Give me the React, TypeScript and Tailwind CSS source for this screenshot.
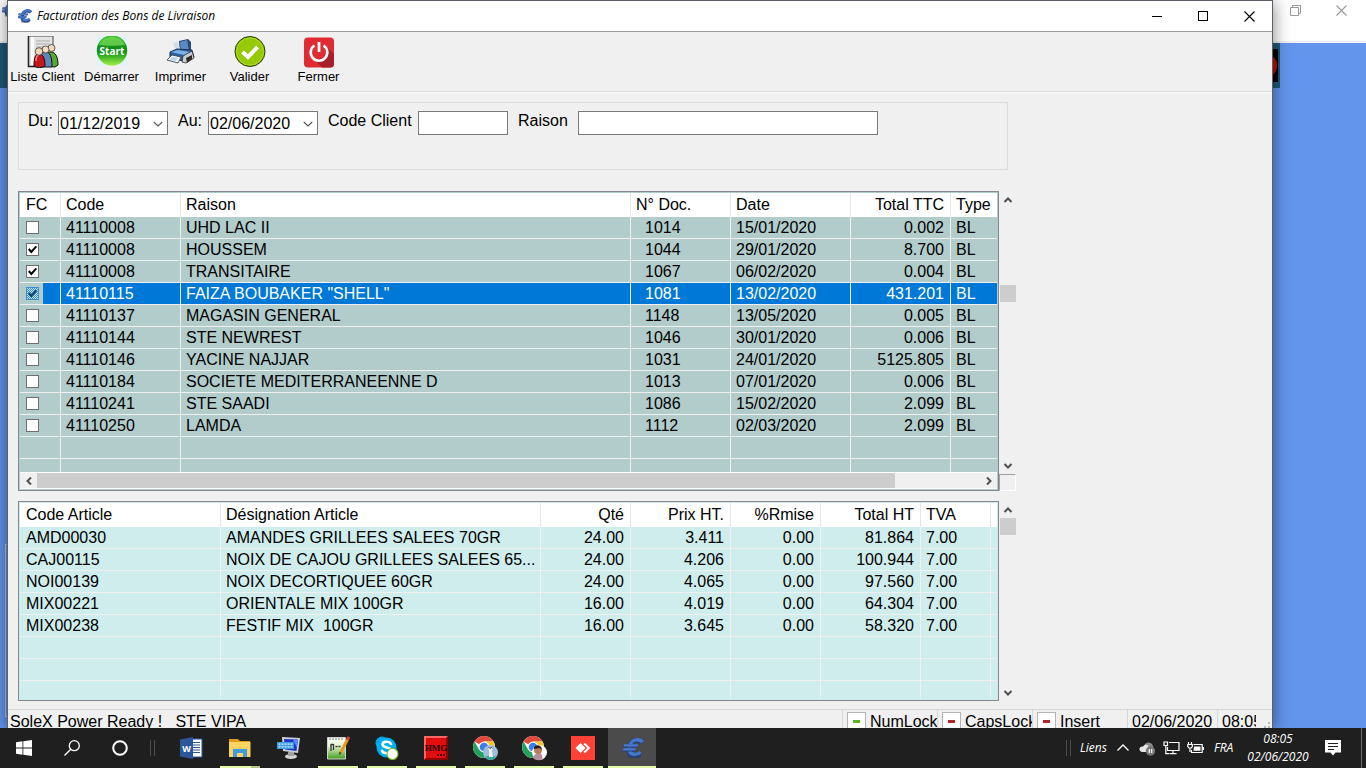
import React from "react";

type Slip = {
  checked: boolean;
  code: string;
  name: string;
  doc: string;
  date: string;
  total: string;
  selected?: boolean;
};

const slips: Slip[] = [
  { checked: false, code: "41110008", name: "UHD LAC II", doc: "1014", date: "15/01/2020", total: "0.002" },
  { checked: true, code: "41110008", name: "HOUSSEM", doc: "1044", date: "29/01/2020", total: "8.700" },
  { checked: true, code: "41110008", name: "TRANSITAIRE", doc: "1067", date: "06/02/2020", total: "0.004" },
  { checked: true, code: "41110115", name: 'FAIZA BOUBAKER "SHELL"', doc: "1081", date: "13/02/2020", total: "431.201", selected: true },
  { checked: false, code: "41110137", name: "MAGASIN GENERAL", doc: "1148", date: "13/05/2020", total: "0.005" },
  { checked: false, code: "41110144", name: "STE NEWREST", doc: "1046", date: "30/01/2020", total: "0.006" },
  { checked: false, code: "41110146", name: "YACINE NAJJAR", doc: "1031", date: "24/01/2020", total: "5125.805" },
  { checked: false, code: "41110184", name: "SOCIETE MEDITERRANEENNE D", doc: "1013", date: "07/01/2020", total: "0.006" },
  { checked: false, code: "41110241", name: "STE SAADI", doc: "1086", date: "15/02/2020", total: "2.099" },
  { checked: false, code: "41110250", name: "LAMDA", doc: "1112", date: "02/03/2020", total: "2.099" },
];

const articles = [
  ["AMD00030", "AMANDES GRILLEES SALEES 70GR", "24.00", "3.411", "0.00", "81.864", "7.00"],
  ["CAJ00115", "NOIX DE CAJOU GRILLEES SALEES 65...", "24.00", "4.206", "0.00", "100.944", "7.00"],
  ["NOI00139", "NOIX DECORTIQUEE 60GR", "24.00", "4.065", "0.00", "97.560", "7.00"],
  ["MIX00221", "ORIENTALE MIX 100GR", "16.00", "4.019", "0.00", "64.304", "7.00"],
  ["MIX00238", "FESTIF MIX  100GR", "16.00", "3.645", "0.00", "58.320", "7.00"],
];

const UI_FONT = "font-['Open_Sans',sans-serif]";

function EuroIcon({ className }: { className: string }) {
  return (
    <svg viewBox="0 0 24 24" className={className} aria-hidden="true">
      <ellipse cx="14" cy="20.500" rx="7" ry="1.500" fill="#1c3566" opacity=".5" />
      <g transform="skewX(-10) translate(3 0)" fill="none">
        <path d="M20.500 6.800C18 3.500 8.500 2 8.500 11.500S18 19.800 20.500 17" stroke="#223f80" strokeWidth="5" />
        <path d="M20.500 6.200C18 3 8.500 1.500 8.500 11S18 19 20.500 16.200" stroke="#4677c9" strokeWidth="3.400" />
        <path d="M2.500 9.800h14M2.500 13.800h12.500" stroke="#223f80" strokeWidth="3.200" />
        <path d="M2.500 9.400h14M2.500 13.400h12.500" stroke="#4a7bcf" strokeWidth="2.200" />
      </g>
    </svg>
  );
}

function ClientsIcon() {
  return (
    <svg viewBox="0 0 32 32" className="size-8" aria-hidden="true">
      <path d="M3 0h23v31H3z" fill="#e4e4e4" />
      <path d="M1.500 0v30.500H12" fill="none" stroke="#222" strokeWidth="1.600" />
      <path d="M2 0h24v10" fill="none" stroke="#444" />
      <path d="M4 1h3v28H4z" fill="#fafafa" />
      <path d="M9 5h14M9 8h14M9 11h8M9 14h4" stroke="#a9a9a9" />
      <path d="M19 30c0-11 1-14 5-14s7 4 7 13l-3 2z" fill="#58a832" stroke="#111" />
      <circle cx="24.500" cy="12" r="3.500" fill="#eed9bd" stroke="#222" strokeWidth=".7" />
      <path d="M13 31c0-11 1-15 5.500-15S25 20 25 31z" fill="#5f86bd" stroke="#111" />
      <circle cx="18.500" cy="13.500" r="3.500" fill="#f2dfc8" stroke="#222" strokeWidth=".7" />
      <path d="M7 30c0-8 1-12 5-12s6 4 6 12c-3 2-8 2-11 0z" fill="#c8171c" stroke="#111" />
      <path d="M9 25c0-4 1-6 3-6" fill="none" stroke="#f08a86" strokeWidth="1.500" />
      <circle cx="12" cy="15.500" r="3.800" fill="#f1d7b8" stroke="#222" strokeWidth=".7" />
    </svg>
  );
}

function StartIcon() {
  return (
    <svg viewBox="0 0 32 32" className="size-8" aria-hidden="true">
      <defs>
        <linearGradient id="startBall" x1="0" y1="0" x2="0" y2="1">
          <stop offset="0" stopColor="#35c225" />
          <stop offset=".45" stopColor="#0c8a17" />
          <stop offset=".62" stopColor="#22a41c" />
          <stop offset="1" stopColor="#a6f04a" />
        </linearGradient>
      </defs>
      <path d="M0 0h32v30H0z" fill="#e4f1f7" />
      <circle cx="16" cy="14.500" r="15.200" fill="url(#startBall)" />
      <path d="M3 9C7-2 25-2 29 9c-8 1-18 1-26 0z" fill="#83df63" opacity=".65" />
      <text x="16" y="18.500" textAnchor="middle" fontSize="10" fontWeight="700" fontFamily="Open Sans, sans-serif" fill="#fff">Start</text>
    </svg>
  );
}

function PrinterIcon() {
  return (
    <svg viewBox="0 0 32 32" className="size-8" aria-hidden="true">
      <path d="M14 5l9-2 3 3v11l-11 1z" fill="#2b4876" />
      <path d="M15 6l7-2 2 11-8 1z" fill="#5b8bc4" />
      <path d="M8 8l4-3 4 10-3 2z" fill="#cfdcec" />
      <path d="M5 16l7-3 15 1 2 7-8 5L5 21z" fill="#2c5f9f" stroke="#1a2f50" />
      <path d="M6 16l7-2 12 2-6 3z" fill="#7bb1e4" />
      <path d="M18 20l9-5 2 7-8 5-4-1z" fill="#c9ced3" stroke="#333" strokeWidth=".8" />
      <path d="M21 22l6-3v4l-5 4z" fill="#302a26" />
      <path d="M7 19l9 2-3 6-11-3z" fill="#f7fafc" stroke="#3d4853" strokeWidth=".9" />
      <path d="M7 21l6 1-2 3-6-1z" fill="#b3d5ea" />
    </svg>
  );
}

function ValidateIcon() {
  return (
    <svg viewBox="0 0 32 32" className="size-8" aria-hidden="true">
      <circle cx="16" cy="15.500" r="15" fill="#96c908" stroke="#26350a" strokeWidth="1" />
      <circle cx="16" cy="15.500" r="13.500" fill="none" stroke="#a9dd22" strokeWidth="1" />
      <path d="M8.500 16l5.500 5 9.500-10" fill="none" stroke="#fff" strokeWidth="4" />
    </svg>
  );
}

function PowerIcon() {
  return (
    <svg viewBox="0 0 32 32" className="size-8" aria-hidden="true">
      <rect x="1" y="1.500" width="30" height="30" rx="4" fill="#df2b31" />
      <path d="M22 10l9 8v10q0 3.500-3.500 3.500H19L10 22z" fill="#a71f2a" />
      <circle cx="16" cy="16" r="7" fill="#df2b31" />
      <path d="M11.500 9.500a8.300 8.300 0 1 0 9 0" fill="none" stroke="#fff" strokeWidth="2.600" />
      <path d="M16 6v10" stroke="#fff" strokeWidth="2.800" />
    </svg>
  );
}

const tools: { label: string; icon: React.ReactNode }[] = [
  { label: "Liste Client", icon: <ClientsIcon /> },
  { label: "Démarrer", icon: <StartIcon /> },
  { label: "Imprimer", icon: <PrinterIcon /> },
  { label: "Valider", icon: <ValidateIcon /> },
  { label: "Fermer", icon: <PowerIcon /> },
];

function Chevron({ dir }: { dir: "up" | "down" | "left" | "right" }) {
  const d = {
    up: "M1.500 7 5 3.500 8.500 7",
    down: "M1.500 3 5 6.500 8.500 3",
    left: "M7 1.500 3.500 5 7 8.500",
    right: "M3 1.500 6.500 5 3 8.500",
  }[dir];
  return (
    <svg viewBox="0 0 10 10" className="size-[10px]" aria-hidden="true">
      <path d={d} fill="none" stroke="#505050" strokeWidth="2" />
    </svg>
  );
}

function CloseGlyph() {
  return (
    <svg viewBox="0 0 11 11" className="size-[11px]" aria-hidden="true">
      <path d="M.5.5l10 10M10.500.5l-10 10" stroke="currentColor" strokeWidth="1.100" />
    </svg>
  );
}

function DateField({ id, label, value }: { id: string; label: string; value: string }) {
  return (
    <div className="flex">
      <label htmlFor={id} className="w-[30px] leading-5">{label}</label>
      <div className="flex h-6 w-[110px] items-stretch border border-[#7a7a7a] bg-white">
        <input id={id} defaultValue={value} className="min-w-0 flex-1 pt-[2px] pl-px leading-5 outline-none" />
        <button type="button" aria-label={`Calendrier ${label}`} className="flex w-[18px] shrink-0 items-center justify-center pt-px">
          <svg viewBox="0 0 10 10" className="size-[10px]" aria-hidden="true">
            <path d="M.8 3 5 7 9.200 3" fill="none" stroke="#555" strokeWidth="1.100" />
          </svg>
        </button>
      </div>
    </div>
  );
}

function RowCheck({ row, index }: { row: Slip; index: number }) {
  const box = row.selected
    ? "border-[#3f8fd0] bg-[#5fa8e2] bg-[repeating-conic-gradient(#2b8bdc_0_25%,#cfe5f6_0_50%)] bg-[length:2px_2px]"
    : "border-[#6e6e6e] bg-white";
  return (
    <label className="grid w-[13px] place-items-center">
      <input
        type="checkbox"
        defaultChecked={row.checked}
        aria-label={`Sélectionner ligne ${index + 1}`}
        className={`peer col-start-1 row-start-1 size-[13px] appearance-none border ${box}`}
      />
      <svg viewBox="0 0 13 13" className="invisible col-start-1 row-start-1 size-[13px] peer-checked:visible" aria-hidden="true">
        <path d="M2.800 6 5.300 9 10.300 3.300" fill="none" stroke={row.selected ? "#06407a" : "#000"} strokeWidth="2" />
      </svg>
    </label>
  );
}

const head = "h-6 border-r border-[#e5e5e5] bg-white pr-[6px] pl-[5px] font-normal leading-6 first:pl-[6px] last:border-r-0 last:pr-0";
const cell = "h-[22px] border-r border-b border-[#f0f0f0] py-0 pr-[6px] pl-[5px] leading-[21px] first:pl-[6px] last:border-r-0";

function SlipTable() {
  return (
    <div className="flex h-[300px] min-w-0 flex-1 flex-col border border-[#828790] bg-[#b2cccc] p-px">
      <div className="min-h-0 flex-1 overflow-hidden">
        <table className="w-full table-fixed border-separate border-spacing-0 whitespace-pre">
          <colgroup>
            <col className="w-[41px]" />
            <col className="w-[120px]" />
            <col />
            <col className="w-[100px]" />
            <col className="w-[120px]" />
            <col className="w-[100px]" />
            <col className="w-[46px]" />
          </colgroup>
          <thead>
            <tr className="text-left">
              <th className={head}>FC</th>
              <th className={head}>Code</th>
              <th className={head}>Raison</th>
              <th className={head}>N° Doc.</th>
              <th className={head}>Date</th>
              <th className={`${head} text-right`}>Total TTC</th>
              <th className={head}>Type</th>
            </tr>
          </thead>
          <tbody>
            {slips.map((row, i) => (
              <tr key={i} className={row.selected ? "bg-[#0078d7] text-white" : ""}>
                <td className={`${cell} ${row.selected ? "bg-[linear-gradient(to_right,#b2cccc_23px,#0078d7_23px)]" : ""}`}>
                  <RowCheck row={row} index={i} />
                </td>
                <td className={cell}>{row.code}</td>
                <td className={cell}>{row.name}</td>
                <td className={`${cell} pl-[14px]`}>{row.doc}</td>
                <td className={cell}>{row.date}</td>
                <td className={`${cell} text-right`}>{row.total}</td>
                <td className={cell}>BL</td>
              </tr>
            ))}
            {[0, 1].map((n) => (
              <tr key={n}>
                {[0, 1, 2, 3, 4, 5, 6].map((c) => <td key={c} className={cell} />)}
              </tr>
            ))}
          </tbody>
        </table>
      </div>
      <div className="flex h-[17px] shrink-0 items-stretch border-y border-white bg-[#f0f0f0]">
        <button type="button" aria-label="Défiler à gauche" className="flex w-[17px] items-center justify-center"><Chevron dir="left" /></button>
        <div className="flex-1">
          <div className="h-full w-[91%] bg-[#cdcdcd]" />
        </div>
        <button type="button" aria-label="Défiler à droite" className="flex w-[17px] items-center justify-center"><Chevron dir="right" /></button>
      </div>
    </div>
  );
}

function ArticleTable() {
  const right = [2, 3, 4, 5];
  const heads = ["Code Article", "Désignation Article", "Qté", "Prix HT.", "%Rmise", "Total HT", "TVA", ""];
  return (
    <div className="h-[200px] min-w-0 flex-1 border border-[#828790] bg-[#d0eded] p-px">
      <div className="h-full overflow-hidden">
        <table className="w-full table-fixed border-separate border-spacing-0 whitespace-pre">
          <colgroup>
            <col className="w-[201px]" />
            <col />
            <col className="w-[90px]" />
            <col className="w-[100px]" />
            <col className="w-[90px]" />
            <col className="w-[100px]" />
            <col className="w-[70px]" />
            <col className="w-[6px]" />
          </colgroup>
          <thead>
            <tr className="text-left">
              {heads.map((h, c) => (
                <th key={c} className={`${head} last:px-0 ${right.includes(c) ? "text-right" : ""}`}>{h}</th>
              ))}
            </tr>
          </thead>
          <tbody>
            {articles.map((row) => (
              <tr key={row[0]}>
                {row.map((v, c) => (
                  <td key={c} className={`${cell} ${right.includes(c) ? "text-right" : ""}`}>{v}</td>
                ))}
                <td className={`${cell} last:px-0`} />
              </tr>
            ))}
            {[0, 1, 2].map((n) => (
              <tr key={n}>
                {heads.map((_, c) => <td key={c} className={`${cell} last:px-0`} />)}
              </tr>
            ))}
          </tbody>
        </table>
      </div>
    </div>
  );
}

function KeyState({ label, on }: { label: string; on?: boolean }) {
  return (
    <div className="flex w-[95px] shrink-0 overflow-hidden border-l border-[#d7d7d7] pl-1">
      <span className="mt-[2px] flex size-[19px] shrink-0 items-center justify-center border border-[#b4b4b4] bg-white">
        <span className={`h-[3px] w-[7px] ${on ? "bg-[#5cb522]" : "bg-[#b52525]"}`} />
      </span>
      <span className="ml-1 whitespace-nowrap">{label}</span>
    </div>
  );
}

function WordIcon() {
  return (
    <svg viewBox="0 0 24 24" className="size-6" aria-hidden="true">
      <path d="M11 3h12v18H11z" fill="#fff" stroke="#2b579a" />
      <path d="M13 6.500h8M13 9h8M13 11.500h8M13 14h8M13 16.500h8" stroke="#2b579a" strokeWidth="1.200" />
      <path d="M1 3.500 14 1v22L1 20.500z" fill="#2b579a" />
      <text x="7.500" y="15.500" textAnchor="middle" fontSize="9" fontWeight="700" fontFamily="Open Sans, sans-serif" fill="#fff">W</text>
    </svg>
  );
}

function FolderIcon() {
  return (
    <svg viewBox="0 0 24 24" className="size-6" aria-hidden="true">
      <path d="M1 3h9l2 2h10v4H1z" fill="#e39a17" />
      <path d="M1 6h21.500v15H1z" fill="#fcd462" />
      <path d="M5 21v-8h14v8h-4v-4H9v4z" fill="#3f9ade" />
    </svg>
  );
}

function MonitorIcon() {
  return (
    <svg viewBox="0 0 24 24" className="size-6" aria-hidden="true">
      <ellipse cx="14" cy="20.500" rx="6" ry="2.500" fill="#d5d5d5" />
      <path d="M11 16h6v4h-6z" fill="#a0a0a0" />
      <path d="M5 1l18 1-2 15-15-2z" fill="#cdd2da" />
      <path d="M7 3l14 .5-1.500 11.500L8 13.500z" fill="#1f33c9" />
      <path d="M16 4l5-.5-1 8z" fill="#5b8bff" />
      <path d="M0 6h17v7H0z" fill="#3b9be0" />
      <path d="M1.500 8.200h14M1.500 10.800h14" stroke="#d8efff" strokeWidth="1.300" strokeDasharray="2 1" />
    </svg>
  );
}

function NotepadIcon() {
  return (
    <svg viewBox="0 0 24 24" className="size-6" aria-hidden="true">
      <defs>
        <linearGradient id="notepadFill" x1="0" y1="0" x2="0" y2="1">
          <stop offset="0" stopColor="#ffffff" />
          <stop offset=".4" stopColor="#e2f2cf" />
          <stop offset="1" stopColor="#3f9f1c" />
        </linearGradient>
      </defs>
      <path d="M1.500 1.500h18V23h-18z" fill="url(#notepadFill)" stroke="#d2d2d2" />
      <path d="M4 2v2M7 2v2M10 2v2M13 2v2M16 2v2" stroke="#777" />
      <path d="M5 8v7M7.500 8v6M5 8.500h2.500M9.500 10.500h2M12.500 10.500h2" stroke="#333" strokeWidth="1.300" />
      <path d="M21.500 3.500 14.500 17" stroke="#e59a20" strokeWidth="3" />
      <path d="M23 1l-1.800 3" stroke="#d24b3a" strokeWidth="3" />
      <path d="M13.500 16l-.5 3 2.500-2z" fill="#222" />
    </svg>
  );
}

function SkypeIcon() {
  return (
    <svg viewBox="0 0 24 24" className="size-6" aria-hidden="true">
      <circle cx="7" cy="7" r="6.500" fill="#00a4e4" />
      <circle cx="11.500" cy="11.500" r="10" fill="#00aff0" />
      <circle cx="17" cy="17" r="6" fill="#00a4e4" />
      <path d="M16 8C14.500 5 7.500 5 7.500 8.600c0 3.700 8.500 2 8.500 5.600 0 4-7.500 4-9 .6" fill="none" stroke="#fff" strokeWidth="2.600" strokeLinecap="round" />
      <circle cx="17.500" cy="18" r="5.500" fill="#fff" stroke="#78b81c" strokeWidth="1.100" />
    </svg>
  );
}

function HmgIcon() {
  return (
    <svg viewBox="0 0 24 24" className="size-6" aria-hidden="true">
      <path d="M0 0h24v24H0z" fill="#e20d0d" />
      <path d="M0 24V0h24l-2 2H2v20z" fill="#ff6868" />
      <path d="M24 0v24H0l2-2h20V2z" fill="#8f0505" />
      <text x="12" y="15" textAnchor="middle" fontSize="9" fontWeight="700" fontFamily="Liberation Serif, serif" fill="#140000">HMG</text>
      <path d="M13 19h9" stroke="#4b0000" strokeWidth="2" strokeDasharray="2 1" />
    </svg>
  );
}

function ChromeIcon({ person }: { person?: boolean }) {
  return (
    <svg viewBox="0 0 26 26" className="size-[26px]" aria-hidden="true">
      <circle cx="12" cy="12" r="11" fill="#fff" />
      <path d="M12 12 2.500 6.500A11 11 0 0 1 21.500 6.500H12z" fill="#df4a3c" />
      <path d="M12 6.500h9.500A11 11 0 0 1 12 23l4.800-8.300z" fill="#fbc628" />
      <path d="M2.500 6.500A11 11 0 0 0 12 23l4.700-8.300L7.200 14.700z" fill="#25a05a" />
      <circle cx="12" cy="12" r="5.400" fill="#fff" />
      <circle cx="12" cy="12" r="4.300" fill="#3b7ded" />
      <circle cx="18.500" cy="17.500" r="7.500" fill={person ? "#fff" : "#9fbede"} />
      {person ? (
        <g>
          <path d="M12 23c1-4 4-5 6.500-5 2 0 3 3 3 6-3 2-7 1.500-9.500-1z" fill="#b98f9c" />
          <circle cx="17" cy="15" r="4" fill="#b67b58" />
          <path d="M12.800 14c0-5 8-5 8 1l-2-2z" fill="#2c1a14" />
        </g>
      ) : (
        <g>
          <path d="M12.500 22q6-3 12 0-6 6-12 0z" fill="#35a99b" />
          <path d="M17 22v-6l-1-3 2 1 2-1v3l1 6z" fill="#eef0e8" />
          <path d="M16.500 12l1.500 1.500L20 12" stroke="#6a5b48" fill="none" />
        </g>
      )}
    </svg>
  );
}

function AnyDeskIcon() {
  return (
    <svg viewBox="0 0 24 24" className="size-6" aria-hidden="true">
      <path d="M0 0h24v24H0z" fill="#ff4136" />
      <path d="M9.500 7l5 5-5 5-5-5z" fill="#fff" />
      <path d="M12.500 8.200 14 6.800l5.200 5.200-5.200 5.200-1.500-1.400L16.300 12z" fill="#fff" />
    </svg>
  );
}

const apps: { name: string; icon: React.ReactNode; line: string; active?: boolean }[] = [
  { name: "Word", icon: <WordIcon />, line: "" },
  { name: "Explorateur de fichiers", icon: <FolderIcon />, line: "w-10 bg-[linear-gradient(to_right,#e2f9a8_31px,#b4c786_31px)]" },
  { name: "Bureau à distance", icon: <MonitorIcon />, line: "" },
  { name: "Bloc-notes", icon: <NotepadIcon />, line: "w-10 bg-[#e2f9a8]" },
  { name: "Skype", icon: <SkypeIcon />, line: "w-10 bg-[#e2f9a8]" },
  { name: "HMG", icon: <HmgIcon />, line: "w-10 bg-[#e2f9a8]" },
  { name: "Chrome", icon: <ChromeIcon />, line: "w-10 bg-[#e2f9a8]" },
  { name: "Chrome 2", icon: <ChromeIcon person />, line: "w-10 bg-[#e2f9a8]" },
  { name: "AnyDesk", icon: <AnyDeskIcon />, line: "w-10 bg-[#e2f9a8]" },
  { name: "Facturation", icon: <EuroIcon className="size-6" />, line: "w-full bg-[#e2f9a8]", active: true },
];

function Taskbar() {
  return (
    <footer className={`flex h-10 shrink-0 items-stretch bg-[#1f1f1f] text-xs text-white ${UI_FONT}`}>
      <button type="button" aria-label="Démarrer" className="flex w-12 items-center justify-center">
        <svg viewBox="0 0 16 16" className="size-4" fill="#fff" aria-hidden="true">
          <path d="M0 2.200 6.500 1.300v6.300H0zM7.300 1.200 16 0v7.600H7.300zM0 8.400h6.500v6.300L0 13.800zM7.300 8.400H16V16l-8.700-1.200z" />
        </svg>
      </button>
      <button type="button" aria-label="Rechercher" className="flex w-12 items-center justify-center">
        <svg viewBox="0 0 16 16" className="size-4" fill="none" stroke="#fff" strokeWidth="1.300" aria-hidden="true">
          <circle cx="10.300" cy="5.700" r="5" />
          <path d="M6.700 9.300.5 15.500" />
        </svg>
      </button>
      <button type="button" aria-label="Cortana" className="flex w-12 items-center justify-center">
        <svg viewBox="0 0 16 16" className="size-4" fill="none" stroke="#fff" strokeWidth="2" aria-hidden="true">
          <circle cx="8" cy="8" r="6.800" />
        </svg>
      </button>
      <span className="ml-[6px] h-4 w-[5px] self-center border-x border-[#4d4d4d]" />
      <nav className="ml-3 flex gap-px">
        {apps.map((a) => (
          <button
            key={a.name}
            type="button"
            aria-label={a.name}
            className={`flex w-12 flex-col items-center ${a.active ? "bg-[#4b4b4b]" : ""}`}
          >
            <span className="flex flex-1 items-center pt-[2px]">{a.icon}</span>
            <span className={`h-[2px] ${a.line}`} />
          </button>
        ))}
      </nav>
      <div className="ml-auto flex items-center">
        <span className="mr-[9px] h-4 w-[5px] border-x border-[#4d4d4d]" />
        <span className="w-9 italic">Liens</span>
        <button type="button" aria-label="Icônes cachées" className="mr-[9px]">
          <svg viewBox="0 0 14 14" className="size-[14px]" fill="none" stroke="#fff" strokeWidth="1.300" aria-hidden="true">
            <path d="M1.500 9.500 7 4l5.500 5.500" />
          </svg>
        </button>
        <svg viewBox="0 0 17 16" className="mr-[7px] h-4 w-[17px]" aria-hidden="true">
          <path d="M5 6c1-4 7-5 9 0l1 5H5z" fill="#8d8d8d" />
          <path d="M3 12c-4-1-3-6 1-5.500C6 3.500 10 5 10 7.500l-2 4.500z" fill="#e6e6e6" />
          <circle cx="11.500" cy="11" r="4.700" fill="#777" />
          <path d="M10.300 9v4M12.700 9v4" stroke="#fff" strokeWidth="1.200" />
        </svg>
        <svg viewBox="0 0 17 16" className="mr-[7px] h-4 w-[17px]" fill="none" stroke="#fff" strokeWidth="1.200" aria-hidden="true">
          <path d="M6 2.500h10v8H4.500V7M10 10.500v3M6.500 13.700h7" />
          <path d="M1 2h3.500v3.500H1zM2.800 5.500v8.200H6" />
        </svg>
        <svg viewBox="0 0 17 16" className="mr-[10px] h-4 w-[17px]" fill="none" stroke="#fff" strokeWidth="1.200" aria-hidden="true">
          <path d="M6.500 4.500h8.700v8H4.500V10M16.500 7v3" />
          <path d="M7 6.500h6.500v4.200H6.500z" fill="#fff" stroke="none" />
          <path d="M1.500 2v2M4.500 2v2M.8 4.500h4.500v2l-1 1.500H2L.8 6.500zM3 8v4" />
        </svg>
        <span className="w-[34px] italic">FRA</span>
        <time className="flex w-[60px] flex-col items-center leading-[18px] italic">
          <span>08:05</span>
          <span>02/06/2020</span>
        </time>
        <button type="button" aria-label="Notifications" className="mr-5 ml-[17px]">
          <svg viewBox="0 0 16 16" className="size-4" aria-hidden="true">
            <path d="M0 0h16v12.500H10.500L8 15.500 5.500 12.500H0z" fill="#fff" />
            <path d="M3 3.500h10M3 6.500h10M3 9.500h6" stroke="#1f1f1f" strokeWidth="1.100" />
          </svg>
        </button>
        <span className="mr-1 h-10 w-px bg-[#6b6b6b]" />
      </div>
    </footer>
  );
}

function BackWindow() {
  return (
    <div className="absolute inset-0 flex flex-col bg-[#6495ed]">
      <div className="flex h-[43px] shrink-0 items-start justify-between border-b-2 border-[#f0f0f0] bg-white pr-[2px] text-[#999]">
        <EuroIcon className="mt-[2px] size-4" />
        <div className="flex">
          <button type="button" aria-label="Restaurer" className="flex h-[21px] w-[46px] items-center justify-center">
            <svg viewBox="0 0 11 11" className="size-[11px]" fill="none" stroke="currentColor" aria-hidden="true">
              <path d="M.5 2.500h8v8h-8zM2.500 2.500v-2h8v8h-2" />
            </svg>
          </button>
          <button type="button" aria-label="Fermer l'application" className="flex h-[21px] w-[46px] items-center justify-center"><CloseGlyph /></button>
        </div>
      </div>
      <div className="mr-[86px] flex h-[45px] shrink-0 items-center justify-end bg-[#1f5878] pr-[2px]">
        <svg viewBox="0 0 33 33" className="size-[33px]" aria-hidden="true">
          <path d="M0 0h33v33H0z" fill="#000" />
          <circle cx="20" cy="16.500" r="12" fill="#c01005" />
        </svg>
      </div>
      <div className="absolute top-[544px] left-[5px] h-[173px] w-5 border border-[#b8c6de]" />
    </div>
  );
}

export default function App() {
  return (
    <div className="flex h-screen flex-col overflow-hidden font-['Liberation_Sans',Arial,sans-serif] text-base text-black">
      <div className="relative min-h-0 flex-1 overflow-hidden">
        <BackWindow />
        <main className="relative mr-[93px] ml-[7px] flex h-full flex-col border border-b-0 border-[#5c6068] bg-[#f0f0f0] shadow-[0_2px_16px_rgba(0,0,0,0.5)]">
          <header className="flex h-[31px] shrink-0 items-center border-b border-[#9a9a9a] bg-white">
            <EuroIcon className="ml-2 size-4" />
            <h1 className={`ml-[5px] text-xs italic ${UI_FONT}`}>Facturation des Bons de Livraison</h1>
            <div className="ml-auto flex h-full">
              <button type="button" aria-label="Réduire" className="flex w-[46px] items-center justify-center"><span className="h-px w-[10px] bg-black" /></button>
              <button type="button" aria-label="Agrandir" className="flex w-[46px] items-center justify-center"><span className="size-[10px] border border-black" /></button>
              <button type="button" aria-label="Fermer la fenêtre" className="flex w-[46px] items-center justify-center"><CloseGlyph /></button>
            </div>
          </header>

          <div className="flex h-[60px] shrink-0 border-b border-[#dcdcdc] pt-1">
            {tools.map((t) => (
              <button key={t.label} type="button" className="flex w-[69px] flex-col items-center text-[13px] leading-[18px] whitespace-nowrap">
                {t.icon}
                {t.label}
              </button>
            ))}
          </div>

          <div className="flex min-h-0 flex-1 flex-col border-t border-white px-[10px] pt-[9px]">
            <form className="flex h-[68px] w-full max-w-[990px] shrink-0 gap-[10px] border border-[#dcdcdc] px-[9px] pt-2">
              <DateField id="du" label="Du:" value="01/12/2019" />
              <DateField id="au" label="Au:" value="02/06/2020" />
              <div className="flex">
                <label htmlFor="code" className="w-[90px] leading-5">Code Client</label>
                <input id="code" className="h-6 w-[90px] border border-[#7a7a7a] bg-white px-1 outline-none" />
              </div>
              <div className="flex">
                <label htmlFor="raison" className="w-[60px] leading-5">Raison</label>
                <input id="raison" className="h-6 w-[300px] border border-[#7a7a7a] bg-white px-1 outline-none" />
              </div>
            </form>

            <section className="mt-[21px] flex w-full max-w-[998px] shrink-0">
              <SlipTable />
              <div className="flex w-[17px] shrink-0 flex-col items-center">
                <button type="button" aria-label="Monter" className="flex h-[17px] items-center"><Chevron dir="up" /></button>
                <div className="flex w-full flex-1 flex-col">
                  <div className="mt-[77px] ml-px h-[17px] bg-[#cdcdcd]" />
                </div>
                <button type="button" aria-label="Descendre" className="flex h-[17px] items-center"><Chevron dir="down" /></button>
                <span className="size-[17px] border border-t-[#a0a0a0] border-r-white border-b-white border-l-[#a0a0a0]" />
              </div>
            </section>

            <section className="mt-[10px] flex w-full max-w-[998px] shrink-0">
              <ArticleTable />
              <div className="flex w-[17px] shrink-0 flex-col items-center">
                <button type="button" aria-label="Monter articles" className="flex h-[17px] items-center"><Chevron dir="up" /></button>
                <div className="flex w-full flex-1 flex-col">
                  <div className="ml-px h-[17px] bg-[#cdcdcd]" />
                </div>
                <button type="button" aria-label="Descendre articles" className="flex h-[17px] items-center"><Chevron dir="down" /></button>
              </div>
            </section>
          </div>

          <div className="flex h-[19px] shrink-0 overflow-hidden border-t border-[#d7d7d7] leading-[23px] whitespace-pre">
            <span className="flex-1 pl-[2px]">SoleX Power Ready !   STE VIPA</span>
            <KeyState label="NumLock" on />
            <KeyState label="CapsLock" />
            <KeyState label="Insert" />
            <span className="w-[90px] shrink-0 border-l border-[#d7d7d7] pl-1">02/06/2020</span>
            <div className="flex w-[55px] shrink-0 justify-between border-l border-[#d7d7d7] pl-1">
              <span className="w-[34px] overflow-hidden">08:05</span>
              <svg viewBox="0 0 8 8" className="mt-[11px] mr-px size-2" fill="#b5b5b5" aria-hidden="true">
                <path d="M5 1h2v2H5zM5 5h2v2H5zM1 5h2v2H1z" />
              </svg>
            </div>
          </div>
        </main>
      </div>
      <Taskbar />
    </div>
  );
}
